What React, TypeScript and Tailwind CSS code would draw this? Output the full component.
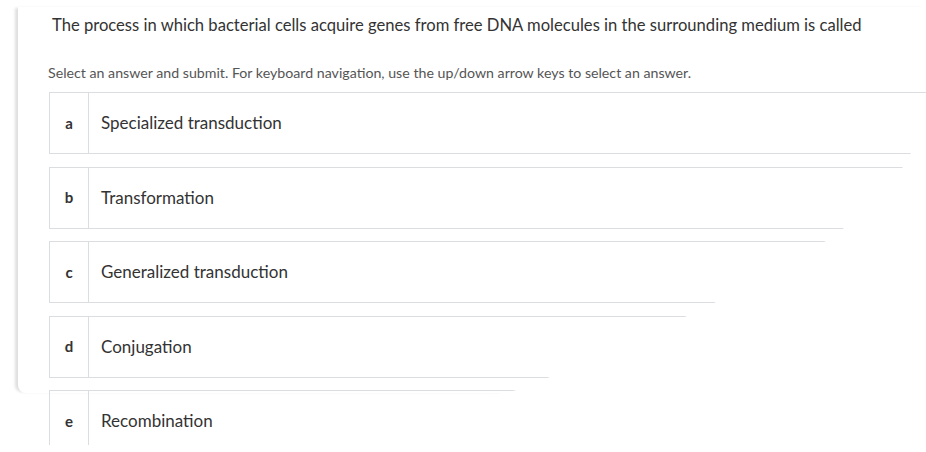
const options = [
  { key: 'a', text: 'Specialized transduction' },
  { key: 'b', text: 'Transformation' },
  { key: 'c', text: 'Generalized transduction' },
  { key: 'd', text: 'Conjugation' },
  { key: 'e', text: 'Recombination' },
];

export default function App() {
  return (
    <div className="w-[926px] h-[452px] bg-white overflow-hidden font-['Lato','Liberation_Sans',sans-serif]">
      {/* torn-edge mask over the whole question card */}
      <div className="h-[452px] [clip-path:polygon(0_0,926px_0,926px_92px,911px_153px,903px_167px,844px_228px,826px_241px,716px_302px,687px_316px,550px_377px,517px_390px,255px_445px,0_445px)]">
        <div className="pl-[18px] pt-[7px]">
          <div className="h-[386px] rounded-bl-[8px] shadow-[-4px_0_3px_-1px_rgba(0,0,0,0.13)]">
            <div className="pl-[34px] pt-[6px] text-[16.6px] leading-6 text-[#333]">
              The process in which bacterial cells acquire genes from free DNA molecules in the surrounding medium is called
            </div>
            <div className="pl-[30px] mt-[26px] text-[14.2px] leading-5 text-[#555]">
              Select an answer and submit. For keyboard navigation, use the up/down arrow keys to select an answer.
            </div>
            <div className="pl-[31px] mt-[9px] flex flex-col gap-[12.5px]">
              {options.map((o) => (
                <div key={o.key} className="w-[900px] h-[62px] shrink-0 flex border border-[#dcdde1]">
                  <div className="w-[39px] shrink-0 border-r border-[#dcdde1] flex items-center justify-center font-bold text-[15px] text-[#333]">
                    {o.key}
                  </div>
                  <div className="pl-[12px] flex items-center text-[17px] text-[#333]">{o.text}</div>
                </div>
              ))}
            </div>
          </div>
        </div>
      </div>
    </div>
  );
}
